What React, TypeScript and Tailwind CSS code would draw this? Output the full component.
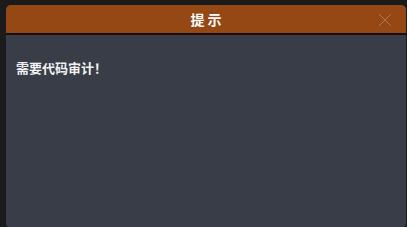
export default function App() {
  return (
    <div
      className="w-[407px] h-[227px] bg-[#1b1b1b] overflow-hidden pt-[5px] pl-[6px] pr-[1px]"
      style={{ fontFamily: '"Noto Sans CJK SC", "Noto Sans", sans-serif' }}
    >
      <div className="h-[223px] flex flex-col rounded-[5px] overflow-hidden bg-[#393d48]">
        {/* Header */}
        <div className="relative h-[30px] shrink-0 bg-[#954714] border-b-2 border-[#111111] flex items-center justify-center">
          <span className="text-white text-[14px] font-bold tracking-[3px] pl-[3px] pt-[1px]">提示</span>
          <button className="absolute right-[14px] top-[8px] w-[14px] h-[14px]">
            <svg viewBox="0 0 14 14" width="14" height="14">
              <path d="M1 1 L13 13 M13 1 L1 13" stroke="#b07a5a" strokeWidth="1" fill="none" />
            </svg>
          </button>
        </div>

        {/* Body */}
        <div className="flex-1 px-[10px] pt-[24px]">
          <p className="text-[#f2f2f2] text-[13px] font-bold leading-[17px]">需要代码审计！</p>
        </div>
      </div>
    </div>
  );
}
